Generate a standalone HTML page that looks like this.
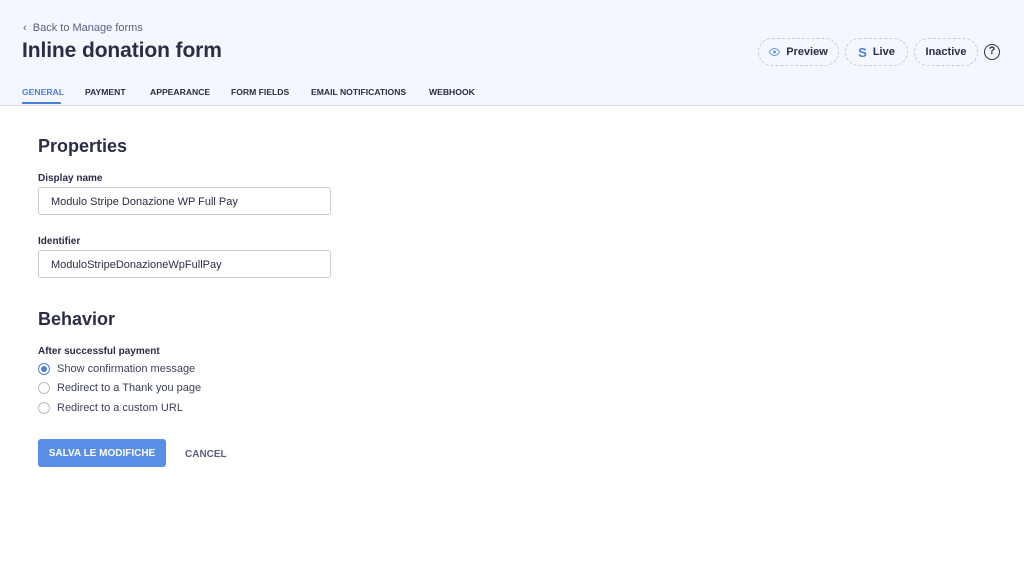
<!DOCTYPE html>
<html><head><style>
*{box-sizing:border-box;margin:0;padding:0}
body{width:1024px;height:575px;background:#fff;font-family:"Liberation Sans",sans-serif;color:#2a2d45;position:relative;overflow:hidden}
.hdr{position:absolute;left:0;top:0;width:1024px;height:106px;background:#f4f7fe;border-bottom:1px solid #dcdfe6}
.abs{position:absolute;white-space:nowrap}
.back{left:23px;top:22px;font-size:11px;color:#596080}
h1{position:absolute;left:22px;top:39px;font-size:21px;font-weight:bold;color:#2a2d45;letter-spacing:-.1px;white-space:nowrap}
.tab{top:87px;font-size:8.6px;font-weight:bold;color:#2a2d45}
.btn{position:absolute;top:38px;height:28px;border:1px dashed #c9ccd8;border-radius:14px;font-size:11px;font-weight:bold;display:flex;align-items:center;justify-content:center;gap:6px;line-height:1}
h2{position:absolute;left:38px;font-size:18px;font-weight:bold;color:#2a2d45}
.lbl{left:38px;font-size:10px;font-weight:bold}
.inp{position:absolute;left:38px;width:293px;height:28px;border:1px solid #c9ccd8;border-radius:3px;font-size:11px;padding:8px 12px;color:#2a2d45}
.rad{position:absolute;left:38px;width:12px;height:12px;border:1px solid #b8bccb;border-radius:50%}
.rt{left:57px;font-size:11px;color:#3c4059}
</style></head><body>
<div class="hdr"></div>
<div class="abs back">‹&nbsp; Back to Manage forms</div>
<h1>Inline donation form</h1>
<div class="abs tab" style="left:22px;color:#4a7ee0">GENERAL</div>
<div style="position:absolute;left:22px;top:102px;width:39px;height:2px;background:#4a7ee0"></div>
<div class="abs tab" style="left:85px">PAYMENT</div>
<div class="abs tab" style="left:150px">APPEARANCE</div>
<div class="abs tab" style="left:231px">FORM FIELDS</div>
<div class="abs tab" style="left:311px">EMAIL NOTIFICATIONS</div>
<div class="abs tab" style="left:429px">WEBHOOK</div>
<div class="btn" style="left:758px;width:81px"><svg width="11" height="8" viewBox="0 0 11 8"><path d="M.5 4C2 1 4 .5 5.5.5S9 1 10.5 4C9 7 7 7.5 5.5 7.5S2 7 .5 4Z" fill="none" stroke="#6e96e0"/><circle cx="5.5" cy="4" r="1.5" fill="#6e96e0"/></svg>Preview</div>
<div class="btn" style="left:845px;width:63px"><span style="color:#4a7ee0;font-size:13px">S</span>Live</div>
<div class="btn" style="left:914px;width:64px">Inactive</div>
<div class="abs" style="left:984px;top:44px;width:16px;height:16px;border:1.5px solid #2a2d45;border-radius:50%;font-size:11px;font-weight:bold;text-align:center;line-height:13px">?</div>
<h2 style="top:136px">Properties</h2>
<div class="abs lbl" style="top:173px">Display name</div>
<div class="inp" style="top:187px">Modulo Stripe Donazione WP Full Pay</div>
<div class="abs lbl" style="top:236px">Identifier</div>
<div class="inp" style="top:250px">ModuloStripeDonazioneWpFullPay</div>
<h2 style="top:309px">Behavior</h2>
<div class="abs lbl" style="top:346px">After successful payment</div>
<div class="rad" style="top:363px;border:1px solid #4a7ee0"><div style="position:absolute;left:2px;top:2px;width:6px;height:6px;border-radius:50%;background:#4a7ee0"></div></div>
<div class="abs rt" style="top:363px">Show confirmation message</div>
<div class="rad" style="top:382px"></div>
<div class="abs rt" style="top:382px">Redirect to a Thank you page</div>
<div class="rad" style="top:402px"></div>
<div class="abs rt" style="top:402px">Redirect to a custom URL</div>
<div class="abs" style="left:38px;top:439px;width:128px;height:28px;background:#5a8ee6;border-radius:3px;color:#fff;font-size:10px;font-weight:bold;display:flex;align-items:center;justify-content:center">SALVA LE MODIFICHE</div>
<div class="abs" style="left:185px;top:449px;font-size:10px;font-weight:bold;color:#596080">CANCEL</div>
</body></html>
